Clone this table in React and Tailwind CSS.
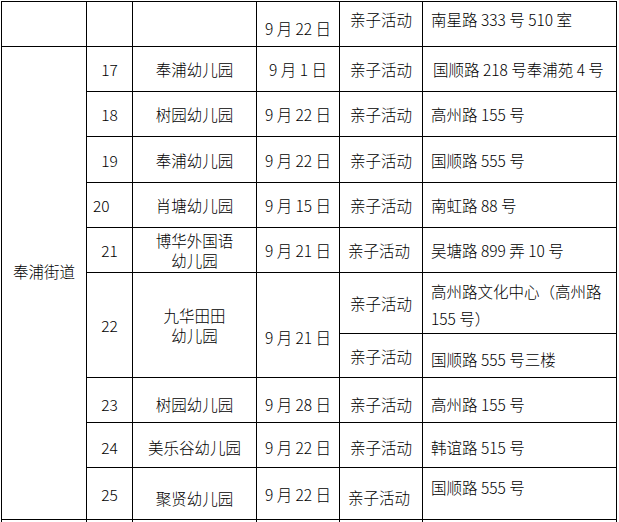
import React from "react";

// 表格里的通用格子样式
const td = "border border-black p-0 align-middle leading-[20px]";

function Act({ className = "" }) {
  return <td className={`${td} text-center ${className}`}>亲子活动</td>;
}

export default function App() {
  return (
    <div className="w-[619px] h-[522px] overflow-hidden bg-white text-black font-['Noto_Sans_CJK_SC','Liberation_Sans',sans-serif] font-light text-[15.5px]">
      <table className="mt-px ml-px w-[615px] table-fixed border-collapse">
        <colgroup>
          <col className="w-[85px]" />
          <col className="w-[46px]" />
          <col className="w-[124px]" />
          <col className="w-[83px]" />
          <col className="w-[83px]" />
          <col className="w-[194px]" />
        </colgroup>
        <tbody>
          <tr className="h-[45px]">
            <td className={td}></td>
            <td className={td}></td>
            <td className={td}></td>
            <td className={`${td} text-center pt-[7px]`}>9 月 22 日</td>
            <td className={`${td} text-center pb-[10px]`}>亲子活动</td>
            <td className={`${td} pl-2 pb-[11px]`}>南星路 333 号 510 室</td>
          </tr>

          <tr className="h-[45px]">
            <td rowSpan={10} className={`${td} text-center pb-[25px]`}>
              奉浦街道
            </td>
            <td className={`${td} text-center`}>17</td>
            <td className={`${td} text-center`}>奉浦幼儿园</td>
            <td className={`${td} text-center`}>9 月 1 日</td>
            <Act />
            <td className={`${td} pl-[10px]`}>国顺路 218 号奉浦苑 4 号</td>
          </tr>

          <tr className="h-[45px]">
            <td className={`${td} text-center`}>18</td>
            <td className={`${td} text-center`}>树园幼儿园</td>
            <td className={`${td} text-center`}>9 月 22 日</td>
            <Act />
            <td className={`${td} pl-2`}>高州路 155 号</td>
          </tr>

          <tr className="h-[46px]">
            <td className={`${td} text-center`}>19</td>
            <td className={`${td} text-center`}>奉浦幼儿园</td>
            <td className={`${td} text-center`}>9 月 22 日</td>
            <Act />
            <td className={`${td} pl-2`}>国顺路 555 号</td>
          </tr>

          <tr className="h-[45px]">
            <td className={`${td} pl-[6px]`}>20</td>
            <td className={`${td} text-center`}>肖塘幼儿园</td>
            <td className={`${td} text-center`}>9 月 15 日</td>
            <Act />
            <td className={`${td} pl-2`}>南虹路 88 号</td>
          </tr>

          <tr className="h-[45px]">
            <td className={`${td} text-center`}>21</td>
            <td className={`${td} text-center`}>
              博华外国语
              <br />
              幼儿园
            </td>
            <td className={`${td} text-center`}>9 月 21 日</td>
            <Act className="pr-1" />
            <td className={`${td} pl-2`}>吴塘路 899 弄 10 号</td>
          </tr>

          <tr className="h-[61px]">
            <td rowSpan={2} className={`${td} text-center`}>
              22
            </td>
            <td rowSpan={2} className={`${td} text-center`}>
              九华田田
              <br />
              幼儿园
            </td>
            <td rowSpan={2} className={`${td} text-center pt-[23px]`}>
              9 月 21 日
            </td>
            <Act />
            <td className={`${td} pl-2 pt-[4px] leading-[27px]`}>
              高州路文化中心（高州路
              <br />
              155 号）
            </td>
          </tr>

          <tr className="h-[44px]">
            <Act />
            <td className={`${td} pl-2 pt-[6px]`}>国顺路 555 号三楼</td>
          </tr>

          <tr className="h-[45px]">
            <td className={`${td} text-center pt-[7px]`}>23</td>
            <td className={`${td} text-center pt-[7px]`}>树园幼儿园</td>
            <td className={`${td} text-center pt-[7px]`}>9 月 28 日</td>
            <Act className="pt-[7px]" />
            <td className={`${td} pl-2 pt-[7px]`}>高州路 155 号</td>
          </tr>

          <tr className="h-[45px]">
            <td className={`${td} text-center pt-[3px]`}>24</td>
            <td className={`${td} text-center pt-[3px]`}>美乐谷幼儿园</td>
            <td className={`${td} text-center pt-[3px]`}>9 月 22 日</td>
            <Act className="pt-[4px]" />
            <td className={`${td} pl-2 pt-[3px]`}>韩谊路 515 号</td>
          </tr>

          <tr className="h-[52px]">
            <td className={`${td} text-center`}>25</td>
            <td className={`${td} text-center pt-[8px]`}>聚贤幼儿园</td>
            <td className={`${td} text-center`}>9 月 22 日</td>
            <Act className="pt-[6px] pr-1" />
            <td className={`${td} pl-2 pb-[14px]`}>国顺路 555 号</td>
          </tr>

          <tr className="h-[8px]">
            <td className={td}></td>
            <td className={td}></td>
            <td className={td}></td>
            <td className={td}></td>
            <td className={td}></td>
            <td className={td}></td>
          </tr>
        </tbody>
      </table>
    </div>
  );
}
